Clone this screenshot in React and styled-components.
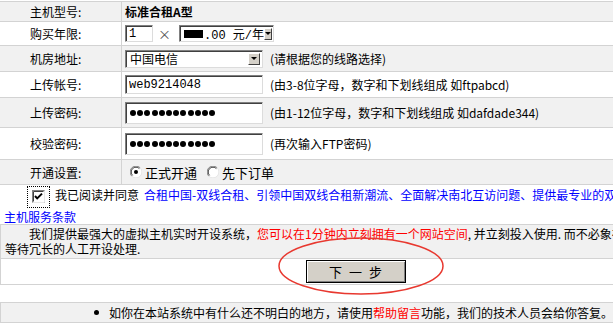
import React from "react";
import styled, { createGlobalStyle } from "styled-components";

const GlobalStyle = createGlobalStyle`
  * {
    box-sizing: border-box;
  }
  body {
    margin: 0;
    overflow: hidden;
    background: #fff;
    color: #000;
    font-family: "Noto Sans CJK SC", "Noto Sans", sans-serif;
    font-size: 12px;
  }
`;

const Page = styled.div`
  position: relative;
  width: 706px;
  padding-top: 1px;
`;

const Table = styled.div`
  border-top: 1px solid #d3d3d3;
`;

const Row = styled.div`
  display: grid;
  grid-template-columns: 122px 1fr;
  height: ${(p) => p.$h}px;
  background: ${(p) => (p.$shade ? "#f1f1f1" : "#fff")};
  border-bottom: 1px solid #d3d3d3;
`;

const Label = styled.div`
  display: flex;
  align-items: center;
  padding-left: 30px;
  border-right: 1px solid #d3d3d3;
`;

const Value = styled.div`
  display: flex;
  align-items: center;
  padding-left: ${(p) => p.$pad ?? 3}px;
  white-space: nowrap;
`;

const Title = styled.span`
  font-weight: bold;
`;

const sunken = `
  background: #fff;
  border: 1px solid;
  border-color: #808080 #dcdcdc #dcdcdc #808080;
  box-shadow: inset 1px 1px 0 #404040;
`;

const Field = styled.input`
  ${sunken}
  width: ${(p) => p.$w}px;
  height: ${(p) => p.$h}px;
  margin: 0;
  padding: 1px 0 0 3px;
  font-family: "Liberation Mono", monospace;
  font-size: 12px;
  color: #000;
  outline: none;
`;

const Secret = styled.div`
  ${sunken}
  display: flex;
  align-items: center;
  gap: 1.2px;
  width: 138px;
  height: 22px;
  padding-left: 4px;
`;

const Dot = styled.span`
  width: 6px;
  height: 6px;
  border-radius: 50%;
  background: #000;
`;

const Select = styled.div`
  ${sunken}
  display: flex;
  align-items: center;
  width: ${(p) => p.$w}px;
  height: ${(p) => p.$h}px;
  padding: 0 2px 0 4px;
`;

const Choice = styled.span`
  flex: 1;
  display: flex;
  align-items: center;
  font-family: ${(p) => (p.$mono ? '"Liberation Mono", "Noto Sans CJK SC", monospace' : "inherit")};
`;

const Blackout = styled.span`
  width: 19px;
  height: 8px;
  background: #000;
  margin-right: 1px;
`;

const Arrow = styled.span`
  display: flex;
  align-items: center;
  justify-content: center;
  width: 12px;
  height: 12px;
  background: #d4d0c8;
  border: 1px solid;
  border-color: #fff #404040 #404040 #fff;
  &::after {
    content: "";
    border-left: 3px solid transparent;
    border-right: 3px solid transparent;
    border-top: 3px solid #000;
  }
`;

const Times = styled.span`
  margin: 0 8px 0 5px;
  color: #555;
  font-size: 13px;
`;

const Hint = styled.span`
  margin-left: 7px;
`;

const RadioText = styled.span`
  margin: 0 10px 0 3px;
  font-size: 13px;
`;

const Agree = styled.div`
  height: 40px;
  padding: 1px 0 0 4px;
  line-height: 17px;
  border-bottom: 1px solid #d3d3d3;
  white-space: nowrap;
`;

const Focus = styled.span`
  display: inline-flex;
  vertical-align: middle;
  margin: 0 5px 0 23px;
  padding: 3px 4px 4px 4px;
  border: 1px dotted #000;
`;

const Link = styled.a`
  margin-left: 5px;
  color: #0000ff;
  text-decoration: none;
`;

const Notice = styled.div`
  height: 34px;
  padding: 1px 0 0 4px;
  line-height: 15px;
  text-indent: 24px;
  background: #f1f1f1;
  border-left: 1px solid #d3d3d3;
  border-bottom: 1px solid #d3d3d3;
  white-space: nowrap;
`;

const Red = styled.span`
  color: #ff0000;
`;

const ButtonRow = styled.div`
  display: flex;
  align-items: center;
  justify-content: center;
  height: 26px;
  padding-left: 4px;
  border-left: 1px solid #d3d3d3;
  border-bottom: 1px solid #d3d3d3;
`;

const Button = styled.button`
  width: 100px;
  height: 23px;
  padding: 0;
  background: #d4d0c8;
  border: 1px solid #000;
  box-shadow: inset 1px 1px 0 #fff, inset -1px -1px 0 #808080;
  font-family: "Noto Sans CJK SC", sans-serif;
  font-size: 13px;
  word-spacing: 4px;
  color: #000;
`;

const Footer = styled.div`
  display: flex;
  align-items: center;
  justify-content: center;
  margin-top: 17px;
  height: 21px;
  background: #f1f1f1;
  border: 1px solid #d3d3d3;
  border-right: none;
`;

const Bullet = styled.span`
  width: 5px;
  height: 5px;
  border-radius: 50%;
  background: #000;
  margin-right: 10px;
`;

const Scribble = styled.svg`
  position: absolute;
  left: 0;
  top: 0;
  pointer-events: none;
`;

const Radio = ({ checked }) => (
  <svg width="12" height="12" viewBox="0 0 12 12">
    <circle cx="6" cy="6" r="5.5" fill="#fff" />
    <path d="M1.8 10.2 A5.5 5.5 0 0 1 10.2 1.8" stroke="#808080" fill="none" />
    <path d="M2.6 9.4 A4.6 4.6 0 0 1 9.4 2.6" stroke="#404040" fill="none" />
    <path d="M10.2 1.8 A5.5 5.5 0 0 1 1.8 10.2" stroke="#e6e6e6" fill="none" />
    {checked && <circle cx="6" cy="6" r="2" fill="#000" />}
  </svg>
);

const Check = () => (
  <svg width="13" height="13" viewBox="0 0 13 13">
    <rect x="0.5" y="0.5" width="12" height="12" fill="#fff" stroke="#808080" />
    <path d="M1.5 11.5 V1.5 H11.5" stroke="#404040" fill="none" />
    <path d="M12.5 0.5 V12.5 H0.5" stroke="#e6e6e6" fill="none" />
    <path d="M3 6 L5.2 8.4 L10 3.6" stroke="#000" strokeWidth="2" fill="none" />
  </svg>
);

const App = () => {
  const dots = Array.from({ length: 12 });

  return (
    <Page>
      <GlobalStyle />
      <Table>
        <Row $h={20} $shade>
          <Label>主机型号:</Label>
          <Value>
            <Title>标准合租A型</Title>
          </Value>
        </Row>
        <Row $h={24}>
          <Label>购买年限:</Label>
          <Value>
            <Field $w={28} $h={17} value="1" readOnly />
            <Times>×</Times>
            <Select $w={95} $h={17}>
              <Choice $mono>
                <Blackout />
                .00 元/年
              </Choice>
              <Arrow />
            </Select>
          </Value>
        </Row>
        <Row $h={26} $shade>
          <Label>机房地址:</Label>
          <Value>
            <Select $w={138} $h={18}>
              <Choice>中国电信</Choice>
              <Arrow />
            </Select>
            <Hint>(请根据您的线路选择)</Hint>
          </Value>
        </Row>
        <Row $h={26}>
          <Label>上传帐号:</Label>
          <Value>
            <Field $w={138} $h={19} value="web9214048" readOnly />
            <Hint>(由3-8位字母，数字和下划线组成 如ftpabcd)</Hint>
          </Value>
        </Row>
        <Row $h={30} $shade>
          <Label>上传密码:</Label>
          <Value>
            <Secret>
              {dots.map((_, i) => (
                <Dot key={i} />
              ))}
            </Secret>
            <Hint>(由1-12位字母，数字和下划线组成 如dafdade344)</Hint>
          </Value>
        </Row>
        <Row $h={32}>
          <Label>校验密码:</Label>
          <Value>
            <Secret>
              {dots.map((_, i) => (
                <Dot key={i} />
              ))}
            </Secret>
            <Hint>(再次输入FTP密码)</Hint>
          </Value>
        </Row>
        <Row $h={25} $shade>
          <Label>开通设置:</Label>
          <Value $pad={8}>
            <Radio checked />
            <RadioText>正式开通</RadioText>
            <Radio />
            <RadioText>先下订单</RadioText>
          </Value>
        </Row>
      </Table>

      <Agree>
        <Focus>
          <Check />
        </Focus>
        我已阅读并同意
        <Link href="#">
          合租中国-双线合租、引领中国双线合租新潮流、全面解决南北互访问题、提供最专业的双线虚拟
          <br />
          主机服务条款
        </Link>
      </Agree>

      <Notice>
        我们提供最强大的虚拟主机实时开设系统，<Red>您可以在1分钟内立刻拥有一个网站空间</Red>, 并立刻投入使用. 而不必象在别处一样
        <br />
        等待冗长的人工开设处理.
      </Notice>

      <ButtonRow>
        <Button type="button">下 一 步</Button>
      </ButtonRow>

      <Footer>
        <Bullet />
        如你在本站系统中有什么还不明白的地方，请使用<Red>帮助留言</Red>功能，我们的技术人员会给你答复。
      </Footer>

      <Scribble width="706" height="324">
        <ellipse cx="361" cy="266" rx="82" ry="28" fill="none" stroke="#e8382f" strokeWidth="1.5" />
      </Scribble>
    </Page>
  );
};

export default App;
